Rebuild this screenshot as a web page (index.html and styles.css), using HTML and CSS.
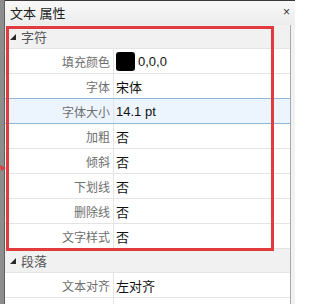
FILE: index.html
```html
<!DOCTYPE html>
<html>
<head>
<meta charset="utf-8">
<link rel="stylesheet" href="styles.css">
</head>
<body>
<div class="window">
  <div class="sidebar"></div>
  <div class="panel">
    <div class="titlebar"><span class="title">文本 属性</span><span class="close">×</span></div>
    <div class="content">
      <div class="grid">
        <div class="group"><span class="tri"></span><span class="gname">字符</span></div>
        <div class="row"><div class="label">填充颜色</div><div class="value"><span class="swatch"></span>0,0,0</div></div>
        <div class="row"><div class="label">字体</div><div class="value">宋体</div></div>
        <div class="row selected"><div class="label">字体大小</div><div class="value">14.1 pt</div></div>
        <div class="row"><div class="label">加粗</div><div class="value">否</div></div>
        <div class="row"><div class="label">倾斜</div><div class="value">否</div></div>
        <div class="row"><div class="label">下划线</div><div class="value">否</div></div>
        <div class="row"><div class="label">删除线</div><div class="value">否</div></div>
        <div class="row"><div class="label">文字样式</div><div class="value">否</div></div>
        <div class="group"><span class="tri"></span><span class="gname">段落</span></div>
        <div class="row"><div class="label">文本对齐</div><div class="value">左对齐</div></div>
        <div class="filler"><div class="label"></div></div>
      </div>
      <div class="scroll"></div>
    </div>
  </div>
  <div class="highlight"></div>
  <svg class="arrow" width="8" height="10" viewBox="0 0 8 10"><polygon points="0,3 6,6 1,9" fill="#e23b3f"/></svg>
</div>
</body>
</html>
```

FILE: styles.css
```css
html, body {
  margin: 0;
  padding: 0;
}
body {
  width: 295px;
  height: 304px;
  overflow: hidden;
  font-family: "Liberation Sans", "Noto Sans CJK SC", sans-serif;
  font-size: 12px;
  background: #ffffff;
}
.window {
  position: relative;
  display: flex;
  width: 295px;
  height: 304px;
  overflow: hidden;
}
.sidebar {
  width: 4px;
  flex: none;
  background: #8d8d8d;
  border-right: 1px solid #5f5f5f;
}
.panel {
  flex: 1;
  display: flex;
  flex-direction: column;
  min-width: 0;
}
.titlebar {
  height: 25px;
  flex: none;
  box-sizing: border-box;
  border-top: 1px solid #3a3a3a;
  background: linear-gradient(#f8f8f8, #ececec);
  display: flex;
  align-items: center;
  justify-content: space-between;
  padding: 0 5px 2px 5px;
}
.title {
  font-size: 13px;
  color: #1b1b1b;
}
.close {
  font-size: 12px;
  color: #333;
  line-height: 1;
  margin-top: 0;
}
.content {
  flex: 1;
  display: flex;
  min-height: 0;
}
.grid {
  width: 285px;
  flex: none;
  display: flex;
  flex-direction: column;
  border-right: 1px solid #a9a9a9;
  background: #fff;
}
.scroll {
  flex: 1;
  background: #f2f2f2;
}
.group {
  height: 24px;
  flex: none;
  box-sizing: border-box;
  border-bottom: 1px solid #e4e4e4;
  background: #f1f1f1;
  display: flex;
  align-items: center;
  padding-left: 5px;
}
.tri {
  width: 0;
  height: 0;
  border-left: 6px solid transparent;
  border-bottom: 6px solid #2a2a2a;
  margin-right: 5px;
  margin-top: 1px;
}
.gname {
  font-size: 13px;
  color: #555;
}
.row {
  display: grid;
  grid-template-columns: 109px 1fr;
  height: 25px;
  flex: none;
  box-sizing: border-box;
  border-bottom: 1px solid #e4e4e4;
}
.row.selected {
  background: #ecf5fd;
  border-bottom: 1px solid #90b6da;
  box-shadow: 0 -1px 0 #90b6da;
}
.filler {
  flex: 1;
  display: grid;
  grid-template-columns: 109px 1fr;
}
.label {
  box-sizing: border-box;
  border-right: 1px solid #e4e4e4;
  text-align: right;
  padding-right: 3px;
  color: #6e6e6e;
  font-size: 12px;
  display: flex;
  align-items: center;
  justify-content: flex-end;
}
.value {
  padding-left: 2px;
  color: #111;
  font-size: 13px;
  display: flex;
  align-items: center;
}
.swatch {
  width: 19px;
  height: 19px;
  background: #000;
  border-radius: 3px;
  margin-right: 3px;
}
.highlight {
  position: absolute;
  left: 6px;
  top: 26px;
  width: 268px;
  height: 225px;
  box-sizing: border-box;
  border: 3px solid #e23b3f;
  pointer-events: none;
}
.arrow {
  position: absolute;
  left: 0;
  top: 162px;
}
```
